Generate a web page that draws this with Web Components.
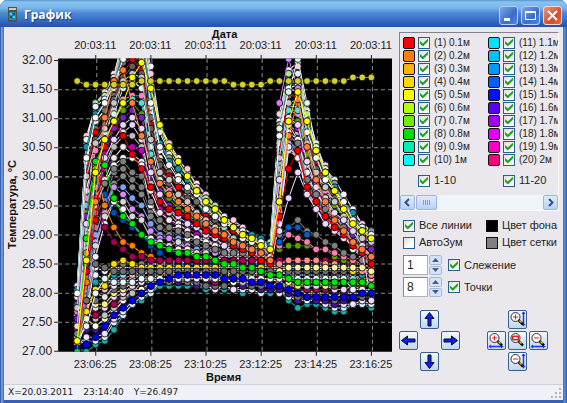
<!DOCTYPE html>
<html lang="ru">
<head>
<meta charset="utf-8">
<title>График</title>
<style>
html, body { margin: 0; height: 100%; }
body { font: 11px/14px "Liberation Sans", Arial, sans-serif; color: #222; background: #fff; }
</style>
</head>
<body>
<app-window caption="График">
  <temp-chart></temp-chart>
  <control-panel slot="side"></control-panel>
  <span slot="status">X=20.03.2011</span>
  <span slot="status">23:14:40</span>
  <span slot="status">Y=26.497</span>
</app-window>

<script>
class AppWindow extends HTMLElement {
  constructor() {
    super();
    this.attachShadow({ mode: 'open' }).innerHTML = `
<style>
:host { display: flex; flex-direction: column; box-sizing: border-box; min-height: 100vh; border-radius: 7px 7px 0 0; overflow: hidden;
  background: linear-gradient(90deg, #3a5ea8 0, #3a5ea8 1px, #6ba2e8 1px, #5a8edc 3px, #3560b4 4px, #3560b4 calc(100% - 4px), #5a8edc calc(100% - 3px), #4a78c8 calc(100% - 1px), #2c4c94 100%); }
header { display: flex; align-items: center; gap: 6px; height: 27px; padding: 0 5px 0 8px; box-sizing: border-box;
  background: linear-gradient(#5a94cc 0, #86c4f0 2px, #7ab4ea 8px, #4c88d8 13px, #3c78cc 18px, #2c5cb4 24px, #2850a4 27px); }
h1 { flex: 1; margin: 0; padding: 3px 0 0 1px; font: bold 12px/16px "Open Sans", "Noto Sans", sans-serif; color: #fff; text-shadow: 1px 1px 1px #1a3878; }
button { width: 19px; height: 19px; padding: 0; border: 1px solid #b8d0f4; border-radius: 3px; background: linear-gradient(135deg, #7ea8e8, #3c6cc8 60%, #5088dc); display: grid; place-items: center; }
button.close { background: linear-gradient(135deg, #f09878, #d84c28 60%, #e06840); border-color: #f4d8d8; }
nav { display: flex; gap: 3px; padding-top: 3px; }
.app { margin-top: 2px; }
main { flex: 1; display: flex; margin: 0 4px; background: #ebe8ed; }
.chart { flex: 1; min-width: 0; }
footer { display: flex; gap: 10px; margin: 0 4px 4px; padding: 0 0 0 4px; height: 16px; background: #eef1f7; border-top: 1px solid #cfd2da; box-sizing: border-box; font: 9px/15px "DejaVu Sans", sans-serif; color: #222; }
.grip { margin: auto 1px 1px auto; }
</style>
<header>
  <svg class="app" width="9" height="15" viewBox="0 0 9 15"><path fill="#50534c" d="M0 0h9v15H0z"/><path fill="#d8c8a8" d="M1 1h7v2H1z"/><path fill="#188cb8" d="M1 5h7v8H1z"/><path fill="#60d0e8" d="M2 6h2v2H2zM5 9h2v2H5z"/><path fill="#0c5070" d="M5 6h2v2H5zM2 9h2v2H2z"/></svg>
  <h1></h1>
  <nav>
    <button aria-label="Свернуть"><svg width="15" height="15"><path fill="#fff" d="M3 10h6v3H3z"/></svg></button>
    <button aria-label="Развернуть"><svg width="15" height="15"><path fill="none" stroke="#fff" d="M2.500 3.500h10v8h-10zM2.500 4.500h10"/></svg></button>
    <button class="close" aria-label="Закрыть"><svg width="15" height="15"><path stroke="#fff" stroke-width="2" d="M3 3l9 9M12 3l-9 9"/></svg></button>
  </nav>
</header>
<main><div class="chart"><slot></slot></div><slot name="side"></slot></main>
<footer><slot name="status"></slot><svg class="grip" width="11" height="11"><path fill="#b4b4bc" d="M8 0h2v2H8zM4 4h2v2H4zM8 4h2v2H8zM0 8h2v2H0zM4 8h2v2H4zM8 8h2v2H8z"/></svg></footer>`;
    this.shadowRoot.querySelector('h1').textContent = this.getAttribute('caption');
  }
}

class TempChart extends HTMLElement {
  constructor() {
    super();
    const X = i => 77 + i * 9.17;
    const Y0 = 59;
    const snap = y => Y0 + Math.round((y - Y0) / 3.65) * 3.65;
    let seed = 7;
    const rnd = () => (seed = (seed * 16807) % 2147483647) / 2147483647;
    const mix = (a, b, u) => a.map((v, i) => v + (b[i] - v) * u);
    const fill = (n, v) => Array(n).fill(v);
    const S = {
      olive: [82, ...fill(6, 85), ...fill(10, 82), ...fill(4, 85), ...fill(9, 82), 79, 79, 79],
      yellow: [340,260,173,140,122,103,78,64,89,126,147,162,176,191,201,209,219,227,234,238,244,249,201,122,93,122,151,173,191,209,222,231,238],
      orange: [345,253,200,118,82,71,103,136,162,183,195,201,209,216,224,231,235,242,245,249,253,260,200,135,100,147,181,201,219,231,240,249,256],
      red: [346,270,220,147,120,136,154,170,187,201,209,213,217,224,230,235,239,245,249,252,258,265,215,169,151,187,201,216,227,235,245,254,262],
      green: [350,238,162,165,199,216,224,235,242,245,249,253,254,256,256,260,264,264,267,267,271,274,274,278,...fill(8, 282), 285],
      blue: [347,344,336,326,315,307,300,292,286,282,278,...fill(5, 274),278,278,278,282,282,285,285,289,292,...fill(6, 297),292,292]
    };
    const upper = [282,138,105,94,74,40,25,30,68,124,142,158,171,184,194,203,214,221,228,233,238,245,115,70,66,112,146,166,181,196,209,225,231];
    const lower = [348,318,255,225,205,210,224,234,240,244,247,250,252,254,255,257,258,260,261,262,263,264,222,150,160,195,208,220,229,237,248,258,266];
    const bandTop = [285,235,264,267,262,262,262,262,260,260,260,...fill(11, 262),262,262,...fill(6, 264),264,266,266];
    const bandLow = [349,348,345,340,327,315,304,297,291,286,284,284,284,286,288,289,289,290,290,290,291,292,292,300,304,304,304,307,310,308,306,304,306];
    const pale = ['#f6f0ff','#c8c8c8','#808080','#ffffff','#e8d8ff','#ffc8e0','#d8f4f0','#888888','#f4f4e0','#c0c0c0','#a8e890','#ff80c0','#80a0f0','#707070','#c000c0','#e8f0ff','#50e0e0','#d090f8','#e00000','#f8e8e8','#999999','#5aa000','#d8d8d8','#606060','#fff','#1a90a8','#7820c0'];
    const low = ['#18b0a8','#d8f0ff','#f0e0ff','#4c10a0','#707070','#fffce0','#c0c0c0','#b00050','#f0d8f8','#f8f090','#707070','#e8e8e8','#ffb0b8','#90d8f0','#18a0a8','#e0f0ff','#f4e0ff','#808080'];
    const list = [];
    const noisy = (a, n) => a.map(v => v + (rnd() - .5) * n);
    const add = (c, d) => list.push([c, d]);
    low.forEach((c, k) => add(c, noisy(mix(bandLow, bandTop, k / (low.length - 1)), 5)));
    const N = 32;
    for (let k = 0; k < N; k++) {
      const u = ((k * 13) % N) / (N - 1);
      const early = mix(upper, lower, Math.pow(u, 1.5));
      const late = mix(upper, lower, u);
      add(pale[k % pale.length], noisy(late.map((v, i) => i > 0 && i < 8 ? early[i] : v), 8));
    }
    const flat = (head, tail) => [...head, ...fill(33 - head.length - tail.length, head[head.length - 1]), ...tail];
    add('#0050b8', flat([350,300,180,195,213,220,228,234,246,252,258,262], [266,270,274]));
    add('#ff8000', flat([350,280,170,205,227,242,245,252,256,259], [262,264,266]));
    add('#a80050', flat([348,262,196,227,242,248,256,256,260], [267,267,270]));
    add('#ffe000', flat([345,310,289,286,262,260,264,266,266], [270,270,272]));
    add('#707070', flat([345,299,264,267,271], [285,285,285]));
    add('#e8f4ff', flat([340,326,293,278,282,282,282,278], [290,290,292]));
    const second = (c, v) => add(c, [...fill(22, null), ...v]);
    second('#5aa000', [250,246,246,246,247,250,256,260,262,264,266]);
    second('#ff80b0', [245,235,238,242,247,249,253,257,260,263,267]);
    second('#ff9090', [263,260,260,260,260,262,264,266,268,270,274]);
    second('#808080', [236,228,219,232,236,242,246,253,256,260,264]);
    second('#0060d0', [240,226,227,234]);
    second('#f0d8ff', [230,198,173,195,209,224,230,238,246,254,300]);
    second('#f8f4a0', [270,267,267,267,267,267,267,267,267,267,271]);
    second('#d080ff', [101, 60, 90]);
    second('#d8f8e0', [128, 92, 60, 103, 148]);
    ['red', 'orange', 'blue', 'green', 'yellow'].forEach(n =>
      add({ red: '#f00000', orange: '#ff8038', blue: '#0000f0', green: '#00e800', yellow: '#ffff00' }[n], S[n]));
    add('#d2d030', S.olive);
    let marks = '';
    for (const [c, d] of list) {
      const p = d.map((v, i) => v == null ? null : [X(i).toFixed(1), snap(v).toFixed(1)]).filter(Boolean);
      marks += `<polyline points="${p.join(' ')}" stroke="${c}"/><g fill="${c}">`;
      for (const [x, y] of p) marks += `<circle cx="${x}" cy="${y}" r="3.4"/>`;
      marks += '</g>';
    }
    const xs = [96, 151, 206, 261, 316, 371];
    const ys = [...Array(11)].map((_, k) => 60 + k * 29);
    const times = ['23:06:25','23:08:25','23:10:25','23:12:25','23:14:25','23:16:25'];
    this.attachShadow({ mode: 'open' }).innerHTML = `
<style>
:host { display: block; }
svg { display: block; width: 100%; height: auto; font: 11px "Liberation Sans", Arial, sans-serif; fill: #222; }
.t { font-weight: bold; fill: #111; }
.m { text-anchor: middle; }
.e { text-anchor: end; font-size: 12px; }
.grid { stroke: #8c8c8c; stroke-dasharray: 4 3; fill: none; }
.tick { stroke: #222; fill: none; }
polyline { fill: none; }
circle { stroke: #000; stroke-width: .8; }
</style>
<svg viewBox="4 27 393 356" role="img" aria-label="График температуры">
<defs><clipPath id="c"><path d="M58 58.500h333v292.500H58z"/></clipPath></defs>
<path fill="#000" d="M58 58.500h333v292.500H58z"/>
<path class="grid" d="${ys.slice(1, 10).map(y => `M58 ${y + .5}H391`).join('')}${xs.map(x => `M${x + .5} 59V351`).join('')}"/>
<path class="tick" d="${ys.map(y => `M54 ${y + .5}H58`).join('')}${xs.map(x => `M${x - .5} 55V59M${x - .5} 351V355`).join('')}"/>
<g clip-path="url(#c)">${marks}</g>
<text class="t m" x="224" y="38">Дата</text>
<text class="t m" x="223" y="380">Время</text>
<text class="t m" transform="translate(16 204) rotate(-90)" x="0" y="0">Температура, °C</text>
${xs.map((x, k) => `<text class="m" x="${x - 1}" y="49">20:03:11</text><text class="m" x="${x - 1}" y="367">${times[k]}</text>`).join('')}
${ys.map((y, k) => `<text class="e" x="52" y="${y + 4}">${(32 - k / 2).toFixed(2)}</text>`).join('')}
</svg>`;
  }
}

class CheckItem extends HTMLElement {
  constructor() {
    super();
    this.attachShadow({ mode: 'open' }).innerHTML = `
<style>
:host { display: flex; align-items: center; white-space: nowrap; height: 13px; }
label { display: flex; align-items: center; gap: 4px; line-height: 13px; }
.sw { flex: none; width: 10px; height: 10px; border: 1px solid #111; border-radius: 2px; margin-right: 3px; }
:host(:not([color])) .sw { display: none; }
input { appearance: none; flex: none; margin: 0; width: 12px; height: 12px; border: 1px solid #2c5c8c; background: linear-gradient(135deg, #dcdcd6, #fff 70%); display: grid; place-items: center; }
input:checked::before { content: ""; width: 8px; height: 8px; background: #21a121; clip-path: polygon(0 30%, 35% 62%, 100% 0, 100% 36%, 35% 100%, 0 66%); }
</style>
<span class="sw"></span><label><input type="checkbox"><span><slot></slot></span></label>`;
    this.shadowRoot.querySelector('.sw').style.background = this.getAttribute('color');
    this.shadowRoot.querySelector('input').checked = !this.hasAttribute('off');
  }
}

class SeriesLegend extends HTMLElement {
  constructor() {
    super();
    const a = ['#ff0000','#ff8000','#ffb400','#ffd800','#ffff00','#b4ff00','#70f000','#00dc00','#00f0b4','#00ffff'];
    const b = ['#00e0ff','#00c0ff','#0098ff','#0060ff','#0010ff','#5800ff','#a000ff','#e000ff','#ff00c0','#ff0078'];
    const row = (c, n) => `<check-item color="${c}">(${n}) ${n % 10 ? (n / 10).toFixed(1) : n / 10}м</check-item>`;
    this.attachShadow({ mode: 'open' }).innerHTML = `
<style>
:host { display: block; box-sizing: border-box; border: 1px solid #fff; border-top-color: #85838a; border-left-color: #85838a; overflow: hidden; font-size: 10px; }
.cols { display: grid; grid-template-columns: 85px 1fr; padding: 3px 0 8px 3px; overflow: hidden; }
.col { min-width: 0; overflow: hidden; }
.all { padding: 8px 0 0 15px; font-size: 11px; }
.bar { display: flex; height: 15px; background: #f0f5fc; }
.bar button { padding: 0; width: 15px; box-sizing: border-box; border: 1px solid #98b4e0; border-radius: 2px; background: linear-gradient(#e0ecff, #b8d0f8); display: grid; place-items: center; }
.bar .thumb { width: 21px; margin-left: 1px; }
.bar .next { margin-left: auto; }
</style>
<div class="cols">
<div class="col">${a.map((c, i) => row(c, i + 1)).join('')}<check-item class="all">1-10</check-item></div>
<div class="col">${b.map((c, i) => row(c, i + 11)).join('')}<check-item class="all">11-20</check-item></div>
</div>
<div class="bar">
<button aria-label="Влево"><svg width="9" height="9"><path fill="none" stroke="#3c5078" stroke-width="2" d="M6 1L2.500 4.500 6 8"/></svg></button>
<button class="thumb" aria-label="Прокрутка"><svg width="8" height="7"><path stroke="#7c9cd0" d="M.5 1v5M2.500 1v5M4.500 1v5M6.500 1v5"/></svg></button>
<button class="next" aria-label="Вправо"><svg width="9" height="9"><path fill="none" stroke="#3c5078" stroke-width="2" d="M3 1l3.500 3.500L3 8"/></svg></button>
</div>`;
  }
}

class SpinBox extends HTMLElement {
  constructor() {
    super();
    this.attachShadow({ mode: 'open' }).innerHTML = `
<style>
:host { display: flex; gap: 1px; height: 20px; }
input { box-sizing: border-box; width: 25px; height: 20px; padding: 0 0 0 3px; border: 1px solid #b4b2b8; border-top-color: #88868c; border-left-color: #88868c; background: #fff; font: 12px "Liberation Sans", Arial, sans-serif; color: #222; }
div { display: grid; grid-template-rows: 1fr 1fr; gap: 1px; }
button { width: 13px; padding: 0; border: 1px solid #a4b8dc; border-radius: 2px; background: #d4e2fa; display: grid; place-items: center; }
</style>
<input type="text" aria-label="${this.getAttribute('name')}" value="${this.getAttribute('value')}">
<div><button aria-label="Больше"><svg width="7" height="4"><path fill="#4c5c7c" d="M0 4l3.500-4L7 4z"/></svg></button><button aria-label="Меньше"><svg width="7" height="4"><path fill="#4c5c7c" d="M0 0l3.500 4L7 0z"/></svg></button></div>`;
  }
}

class ToolButton extends HTMLElement {
  constructor() {
    super();
    const kind = this.getAttribute('kind');
    const arrow = r => `<path transform="rotate(${r} 8.5 8.5)" fill="#1020f0" stroke="#000828" d="M8.500 1.500L13 7.500H10v7.500H7V7.500H4z"/>`;
    const lens = mark => `<circle cx="6.500" cy="6" r="4.500" fill="#fff" fill-opacity=".8" stroke="#333"/><path stroke="#111" stroke-width="2.500" d="M9.500 9l4.500 4.500"/><path stroke="#e8c800" stroke-width="1.500" d="M10.500 9.500l2 2"/><path fill="none" stroke="#e82020" d="${mark}"/>`;
    const plus = 'M4 6h5M6.500 3.500v5', minus = 'M4 6h5';
    const v = '<path stroke="#2030ff" stroke-width="1.500" d="M14.500 1v13"/><path fill="#2030ff" d="M12.500 3l2-2.500 2 2.500zM12.500 13l2 2.500 2-2.500z"/>';
    const h = '<path stroke="#2030ff" stroke-width="1.500" d="M2 14.500h12"/><path fill="#2030ff" d="M3 12.500L.5 14.500 3 16.500zM13 12.500l2.500 2-2.500 2z"/>';
    const art = {
      up: arrow(0), right: arrow(90), down: arrow(180), left: arrow(270),
      vin: v + lens(plus), vout: v + lens(minus), hin: h + lens(plus), hout: h + lens(minus),
      fit: lens('M4 4.500h5v3H4zM3.500 4h6v4h-6z')
    }[kind];
    this.attachShadow({ mode: 'open' }).innerHTML = `
<style>
:host { display: block; }
button { box-sizing: border-box; width: 19px; height: 19px; padding: 0; border: 1px solid #38608c; border-radius: 2px; background: linear-gradient(#f4f8fc, #c4d6ee); display: grid; place-items: center; }
</style>
<button aria-label="${this.getAttribute('label')}"><svg width="17" height="17" viewBox="0 0 17 17">${art}</svg></button>`;
  }
}

class ControlPanel extends HTMLElement {
  constructor() {
    super();
    this.attachShadow({ mode: 'open' }).innerHTML = `
<style>
:host { display: flex; flex-direction: column; box-sizing: border-box; width: 165px; padding: 5px 4px 0 1px; }
.opts { display: grid; grid-template-columns: 83px 1fr; row-gap: 4px; padding: 8px 0 0 4px; }
.pick { display: flex; align-items: center; gap: 4px; padding: 0; border: 0; background: none; font: inherit; line-height: 13px; color: inherit; white-space: nowrap; height: 13px; }
.pick i { box-sizing: border-box; width: 12px; height: 12px; border: 1px solid #111; background: var(--c); }
.spins { display: grid; grid-template-columns: 45px 1fr; row-gap: 2px; align-items: center; padding: 6px 0 0 4px; }
.pads { display: flex; justify-content: space-between; padding: 13px 11px 0 0; }
.pad { display: grid; grid-template: repeat(3, 19px) / repeat(3, 19px); gap: 2px; }
.u { grid-area: 1 / 2; } .l { grid-area: 2 / 1; } .c { grid-area: 2 / 2; } .r { grid-area: 2 / 3; } .d { grid-area: 3 / 2; }
</style>
<series-legend></series-legend>
<div class="opts">
<check-item>Все линии</check-item><button class="pick" style="--c:#000"><i></i>Цвет фона</button>
<check-item off>АвтоЗум</check-item><button class="pick" style="--c:#808080"><i></i>Цвет сетки</button>
</div>
<div class="spins">
<spin-box name="Слежение" value="1"></spin-box><check-item>Слежение</check-item>
<spin-box name="Точки" value="8"></spin-box><check-item>Точки</check-item>
</div>
<div class="pads">
<div class="pad"><tool-button class="u" kind="up" label="Вверх"></tool-button><tool-button class="l" kind="left" label="Влево"></tool-button><tool-button class="r" kind="right" label="Вправо"></tool-button><tool-button class="d" kind="down" label="Вниз"></tool-button></div>
<div class="pad"><tool-button class="u" kind="vin" label="Увеличить по вертикали"></tool-button><tool-button class="l" kind="hin" label="Увеличить по горизонтали"></tool-button><tool-button class="c" kind="fit" label="Вписать"></tool-button><tool-button class="r" kind="hout" label="Уменьшить по горизонтали"></tool-button><tool-button class="d" kind="vout" label="Уменьшить по вертикали"></tool-button></div>
</div>`;
  }
}
customElements.define('check-item', CheckItem);
customElements.define('spin-box', SpinBox);
customElements.define('tool-button', ToolButton);
customElements.define('series-legend', SeriesLegend);
customElements.define('temp-chart', TempChart);
customElements.define('control-panel', ControlPanel);
customElements.define('app-window', AppWindow);
</script>
</body>
</html>
